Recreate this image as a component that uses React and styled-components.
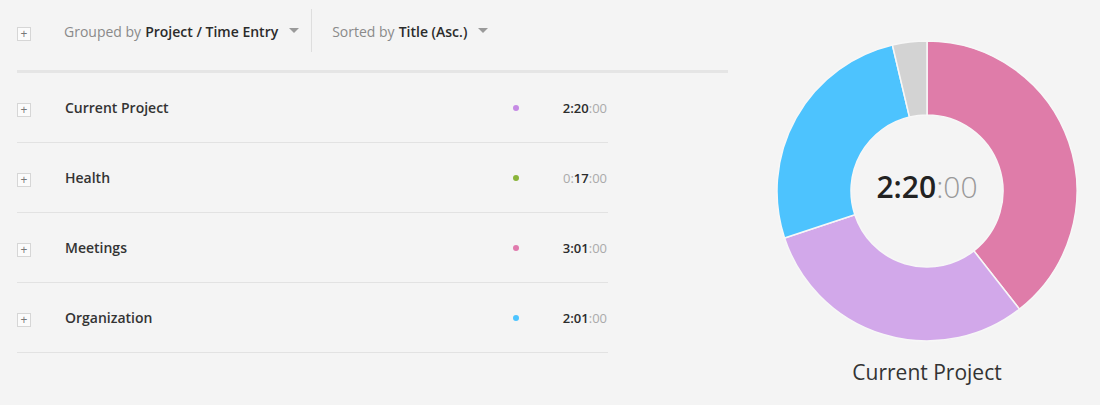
import React from "react";
import styled, { createGlobalStyle } from "styled-components";

const GlobalStyle = createGlobalStyle`
  html, body {
    margin: 0;
    padding: 0;
    background: #f4f4f4;
    font-family: "Open Sans", "Liberation Sans", sans-serif;
    color: #333;
  }
`

const Page = styled.div`
  display: flex;
  align-items: flex-start;
  padding-left: 17px;
  height: 405px;
  box-sizing: border-box;
`

const ListPanel = styled.div`
  width: 711px;
`

const Toolbar = styled.div`
  display: flex;
  align-items: center;
  height: 43px;
  padding: 9px 0 18px;
  border-bottom: 3px solid #e5e5e5;
`

const PlusBox = styled.div`
  width: 12px;
  height: 12px;
  border: 1px solid #d6d6d6;
  background: #fbfbfb;
  display: flex;
  align-items: center;
  justify-content: center;
  flex-shrink: 0;
  margin-top: ${p => p.$offset || 0}px;
  color: #777;
  font-size: 12px;
  line-height: 1;
`

const Menu = styled.div`
  display: flex;
  align-items: center;
  height: 100%;
  padding: 2px ${p => p.$padRight}px 0 ${p => p.$padLeft}px;
  box-sizing: border-box;
  font-size: 14px;
  color: #8a8a8a;
  border-right: ${p => (p.$divider ? "1px solid #dedede" : "none")};
  white-space: nowrap;
`

const Strong = styled.span`
  color: #2b2b2b;
  font-weight: 600;
  margin-left: 4px;
`

const Caret = styled.span`
  width: 0;
  height: 0;
  border-left: 5px solid transparent;
  border-right: 5px solid transparent;
  border-top: 5px solid #9a9a9a;
  margin-left: 11px;
  margin-top: -3px;
`

const Rows = styled.div`
  width: 591px;
`

const Row = styled.div`
  display: flex;
  align-items: center;
  height: 69px;
  border-bottom: 1px solid #e2e2e2;
`

const Label = styled.div`
  flex: 1;
  margin-left: 34px;
  font-size: 14px;
  font-weight: 600;
  color: #333;
`

const Dot = styled.span`
  width: 6px;
  height: 6px;
  border-radius: 50%;
  background: ${p => p.$color};
  margin-right: 42px;
`

const Time = styled.div`
  width: 46px;
  margin-right: 1px;
  text-align: right;
  font-size: 13px;
  color: #aaa;
`

const TimeBold = styled.span`
  color: #2b2b2b;
  font-weight: 600;
`

const ChartPanel = styled.div`
  margin-left: 48px;
  margin-top: 40px;
  width: 302px;
  display: flex;
  flex-direction: column;
  align-items: center;
`

const ChartWrap = styled.div`
  position: relative;
  width: 302px;
  height: 302px;
`

const CenterTime = styled.div`
  position: absolute;
  inset: 0;
  display: flex;
  align-items: center;
  justify-content: center;
  padding-bottom: 9px;
  box-sizing: border-box;
  font-size: 30px;
  font-weight: 300;
  color: #999;
`

const CenterBold = styled.span`
  color: #222;
  font-weight: 600;
`

const ChartTitle = styled.div`
  margin-top: 16px;
  font-size: 21px;
  color: #333;
`

const projects = [
  { name: "Current Project", minutes: 140, dot: "#c58ae4", fill: "#d2a8ea" },
  { name: "Health", minutes: 17, dot: "#8ab43a", fill: "#d3d3d3" },
  { name: "Meetings", minutes: 181, dot: "#e07aad", fill: "#df7ca9" },
  { name: "Organization", minutes: 121, dot: "#4cc4ff", fill: "#4dc3fe" },
]

const chartOrder = ["Meetings", "Current Project", "Organization", "Health"]

const TimeValue = ({ minutes }) => {
  const h = Math.floor(minutes / 60)
  const m = String(minutes % 60).padStart(2, "0")
  if (h === 0) {
    return <Time>0:<TimeBold>{m}</TimeBold>:00</Time>
  }
  return <Time><TimeBold>{h}:{m}</TimeBold>:00</Time>
}

const polar = (cx, cy, r, deg) => {
  const a = (deg - 90) * Math.PI / 180
  return [cx + r * Math.cos(a), cy + r * Math.sin(a)]
}

const arcPath = (start, end, ro, ri) => {
  const c = 151
  const large = end - start > 180 ? 1 : 0
  const [x1, y1] = polar(c, c, ro, start)
  const [x2, y2] = polar(c, c, ro, end)
  const [x3, y3] = polar(c, c, ri, end)
  const [x4, y4] = polar(c, c, ri, start)
  return `M${x1} ${y1} A${ro} ${ro} 0 ${large} 1 ${x2} ${y2} L${x3} ${y3} A${ri} ${ri} 0 ${large} 0 ${x4} ${y4} Z`
}

const Donut = () => {
  const total = projects.reduce((s, p) => s + p.minutes, 0)
  let angle = 0
  return (
    <svg width="302" height="302" viewBox="0 0 302 302">
      {chartOrder.map(name => {
        const p = projects.find(x => x.name === name)
        const start = angle
        const end = angle + (p.minutes / total) * 360
        angle = end
        return <path key={name} d={arcPath(start, end, 150, 76)} fill={p.fill} stroke="#f7f7f7" strokeWidth="1.5" />
      })}
    </svg>
  )
}

export default function App() {
  return (
    <>
      <GlobalStyle />
      <Page>
        <ListPanel>
          <Toolbar>
            <PlusBox $offset={6}>+</PlusBox>
            <Menu $padLeft={33} $padRight={12} $divider>
              Grouped by<Strong>Project / Time Entry</Strong><Caret />
            </Menu>
            <Menu $padLeft={20} $padRight={0}>
              Sorted by<Strong>Title (Asc.)</Strong><Caret />
            </Menu>
          </Toolbar>
          <Rows>
            {projects.map(p => (
              <Row key={p.name}>
                <PlusBox $offset={4}>+</PlusBox>
                <Label>{p.name}</Label>
                <Dot $color={p.dot} />
                <TimeValue minutes={p.minutes} />
              </Row>
            ))}
          </Rows>
        </ListPanel>
        <ChartPanel>
          <ChartWrap>
            <Donut />
            <CenterTime><CenterBold>2:20</CenterBold>:00</CenterTime>
          </ChartWrap>
          <ChartTitle>Current Project</ChartTitle>
        </ChartPanel>
      </Page>
    </>
  )
}
